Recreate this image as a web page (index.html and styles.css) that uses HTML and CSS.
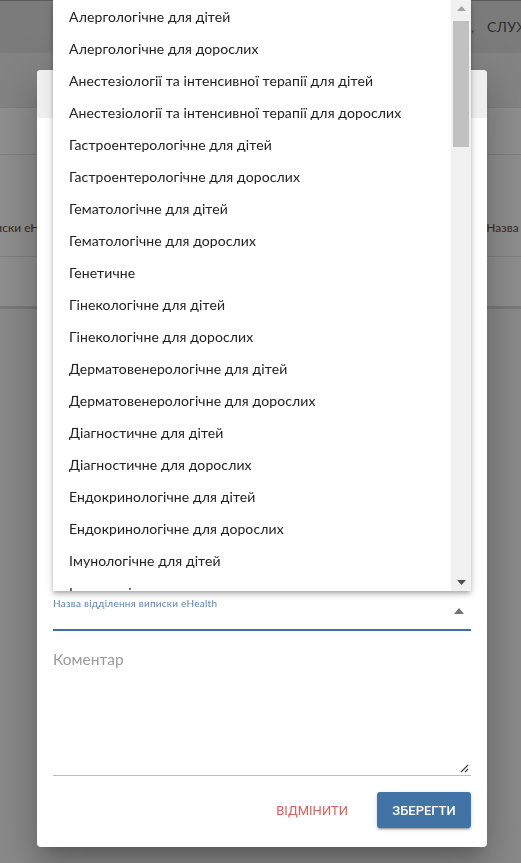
FILE: index.html
```html
<!DOCTYPE html>
<html lang="uk">
<head>
<meta charset="utf-8">
<title>Виписка</title>
<link rel="stylesheet" href="styles.css">
</head>
<body>
<div class="page">
  <header class="appbar">
    <span class="appbar-mark">,</span>
    <nav class="appbar-nav">СЛУЖБИ</nav>
  </header>
  <div class="toolbar"></div>
  <div class="table">
    <div class="table-row table-row--tabs"></div>
    <div class="table-row table-row--head">
      <div class="th th--left">Назва відділення виписки eHealth</div>
      <div class="th th--right">Назва відділення</div>
    </div>
    <div class="table-row table-row--body"></div>
  </div>
</div>

<div class="dialog">
  <div class="dialog-title"></div>
  <div class="dialog-body">
    <div class="select-field">
      <label class="select-label">Назва відділення виписки eHealth</label>
      <div class="select-control">
        <span class="select-value"></span>
        <svg class="select-arrow" width="10" height="6" viewBox="0 0 10 6"><path d="M0 6 L5 0 L10 6 Z" fill="#757575"/></svg>
      </div>
    </div>
    <div class="textarea-field">
      <span class="textarea-placeholder">Коментар</span>
      <svg class="resize-handle" width="9" height="9" viewBox="0 0 9 9"><path d="M1 8 L8 1 M5 8 L8 5" stroke="#444" stroke-width="1.2"/></svg>
    </div>
    <div class="dialog-actions">
      <button class="btn btn--text">Відмінити</button>
      <button class="btn btn--primary">Зберегти</button>
    </div>
  </div>
</div>

<div class="menu">
  <ul class="menu-list">
    <li>Алергологічне для дітей</li>
    <li>Алергологічне для дорослих</li>
    <li>Анестезіології та інтенсивної терапії для дітей</li>
    <li>Анестезіології та інтенсивної терапії для дорослих</li>
    <li>Гастроентерологічне для дітей</li>
    <li>Гастроентерологічне для дорослих</li>
    <li>Гематологічне для дітей</li>
    <li>Гематологічне для дорослих</li>
    <li>Генетичне</li>
    <li>Гінекологічне для дітей</li>
    <li>Гінекологічне для дорослих</li>
    <li>Дерматовенерологічне для дітей</li>
    <li>Дерматовенерологічне для дорослих</li>
    <li>Діагностичне для дітей</li>
    <li>Діагностичне для дорослих</li>
    <li>Ендокринологічне для дітей</li>
    <li>Ендокринологічне для дорослих</li>
    <li>Імунологічне для дітей</li>
    <li>Імунологічне для дорослих</li>
  </ul>
  <div class="scrollbar">
    <div class="scroll-btn"><svg width="9" height="5" viewBox="0 0 9 5"><path d="M0 5 L4.5 0 L9 5 Z" fill="#a3a3a3"/></svg></div>
    <div class="scroll-track"><div class="scroll-thumb"></div></div>
    <div class="scroll-btn"><svg width="9" height="5" viewBox="0 0 9 5"><path d="M0 0 L4.5 5 L9 0 Z" fill="#505050"/></svg></div>
  </div>
</div>
</body>
</html>
```

FILE: styles.css
```css
* { box-sizing: border-box; }
html, body { margin: 0; padding: 0; }
body {
  width: 521px;
  height: 863px;
  overflow: hidden;
  background: #8a8a8a;
  font-family: Lato, "Open Sans", "Noto Sans", sans-serif;
  color: #212121;
}

/* background page, already dimmed by the overlay */
.page { display: flex; flex-direction: column; }
.appbar {
  height: 52px;
  background: #7b7b7b;
  border-top: 1px solid #5a5a5a;
  display: flex;
  align-items: center;
  padding-left: 471px;
  white-space: nowrap;
  overflow: hidden;
}
.appbar-mark { color: #2c3a5a; font-size: 14px; width: 16px; flex-shrink: 0; }
.appbar-nav { color: #2e2e2e; font-size: 14px; letter-spacing: 0.3px; flex-shrink: 0; }
.toolbar {
  height: 55px;
  background: #848484;
  border-top: 1px solid #7c7c7c;
}
.table { background: #8f8f8f; display: flex; flex-direction: column; }
.table-row { border-bottom: 1px solid #7f7f7f; }
.table-row--tabs { height: 48px; border-top: 1px solid #7f7f7f; }
.table-row--head {
  height: 102px;
  display: flex;
  justify-content: space-between;
  align-items: flex-end;
  padding-bottom: 21px;
  font-size: 12px;
  color: #3a2a22;
  white-space: nowrap;
  overflow: hidden;
}
.th { flex-shrink: 0; }
.th--left { margin-left: -122px; }
.th--right { margin-right: -60px; }
.table-row--body { height: 52px; border-bottom: 3px solid #7b7b7b; }

/* dialog */
.dialog {
  position: fixed;
  left: 37px;
  top: 70px;
  width: 450px;
  height: 777px;
  background: #fff;
  border-radius: 4px;
  box-shadow: 0 11px 15px -7px rgba(0,0,0,.2), 0 24px 38px 3px rgba(0,0,0,.14), 0 9px 46px 8px rgba(0,0,0,.12);
  display: flex;
  flex-direction: column;
  overflow: hidden;
}
.dialog-title { height: 48px; background: #efefef; flex-shrink: 0; }
.dialog-body {
  flex: 1;
  display: flex;
  flex-direction: column;
  justify-content: flex-end;
  padding: 0 16px 19px;
}
.select-field { display: flex; flex-direction: column; }
.select-label {
  font-size: 10px;
  color: #5a85b6;
  letter-spacing: 0.25px;
  line-height: 14px;
}
.select-control {
  height: 21px;
  display: flex;
  align-items: flex-start;
  justify-content: space-between;
  border-bottom: 2px solid #3f6fa6;
  padding-right: 7px;
}
.select-arrow { margin-top: -2px; }
.textarea-field {
  margin-top: 16px;
  height: 129px;
  border-bottom: 1px solid #bdbdbd;
  display: flex;
  justify-content: space-between;
  padding-top: 2px;
}
.textarea-placeholder { font-size: 15.5px; color: #9b9b9b; line-height: 20px; }
.resize-handle { align-self: flex-end; margin-bottom: 2px; margin-right: 2px; }
.dialog-actions {
  margin-top: 16px;
  display: flex;
  justify-content: flex-end;
  align-items: center;
  gap: 29px;
}
.btn {
  font-family: Roboto, "Noto Sans", sans-serif;
  font-size: 13px;
  text-transform: uppercase;
  border: 0;
  background: none;
  cursor: pointer;
  height: 36px;
  letter-spacing: 0;
}
.btn--text { color: #dc5f59; padding: 0; }
.btn--primary {
  background: #4273a6;
  color: #fff;
  font-weight: 500;
  border-radius: 3px;
  width: 94px;
  box-shadow: 0 3px 1px -2px rgba(0,0,0,.2), 0 2px 2px 0 rgba(0,0,0,.14), 0 1px 5px 0 rgba(0,0,0,.12);
}

/* open dropdown menu */
.menu {
  position: absolute;
  left: 53px;
  top: 0;
  width: 418px;
  height: 591px;
  background: #fff;
  box-shadow: 0 2px 4px -1px rgba(0,0,0,.2), 0 4px 5px 0 rgba(0,0,0,.14), 0 1px 10px 0 rgba(0,0,0,.12);
  display: flex;
  overflow: hidden;
}
.menu-list {
  list-style: none;
  margin: 0;
  padding: 1px 0 0;
  flex: 1;
  overflow: hidden;
}
.menu-list li {
  height: 32px;
  line-height: 32px;
  padding-left: 16px;
  font-size: 14px;
  letter-spacing: 0.1px;
  white-space: nowrap;
}
.scrollbar {
  width: 20px;
  background: #f1f1f1;
  display: flex;
  flex-direction: column;
  padding: 0 2px;
}
.scroll-btn {
  height: 17px;
  display: flex;
  align-items: center;
  justify-content: center;
}
.scroll-track { flex: 1; padding-top: 4px; }
.scroll-thumb { height: 126px; background: #c1c1c1; }
```
